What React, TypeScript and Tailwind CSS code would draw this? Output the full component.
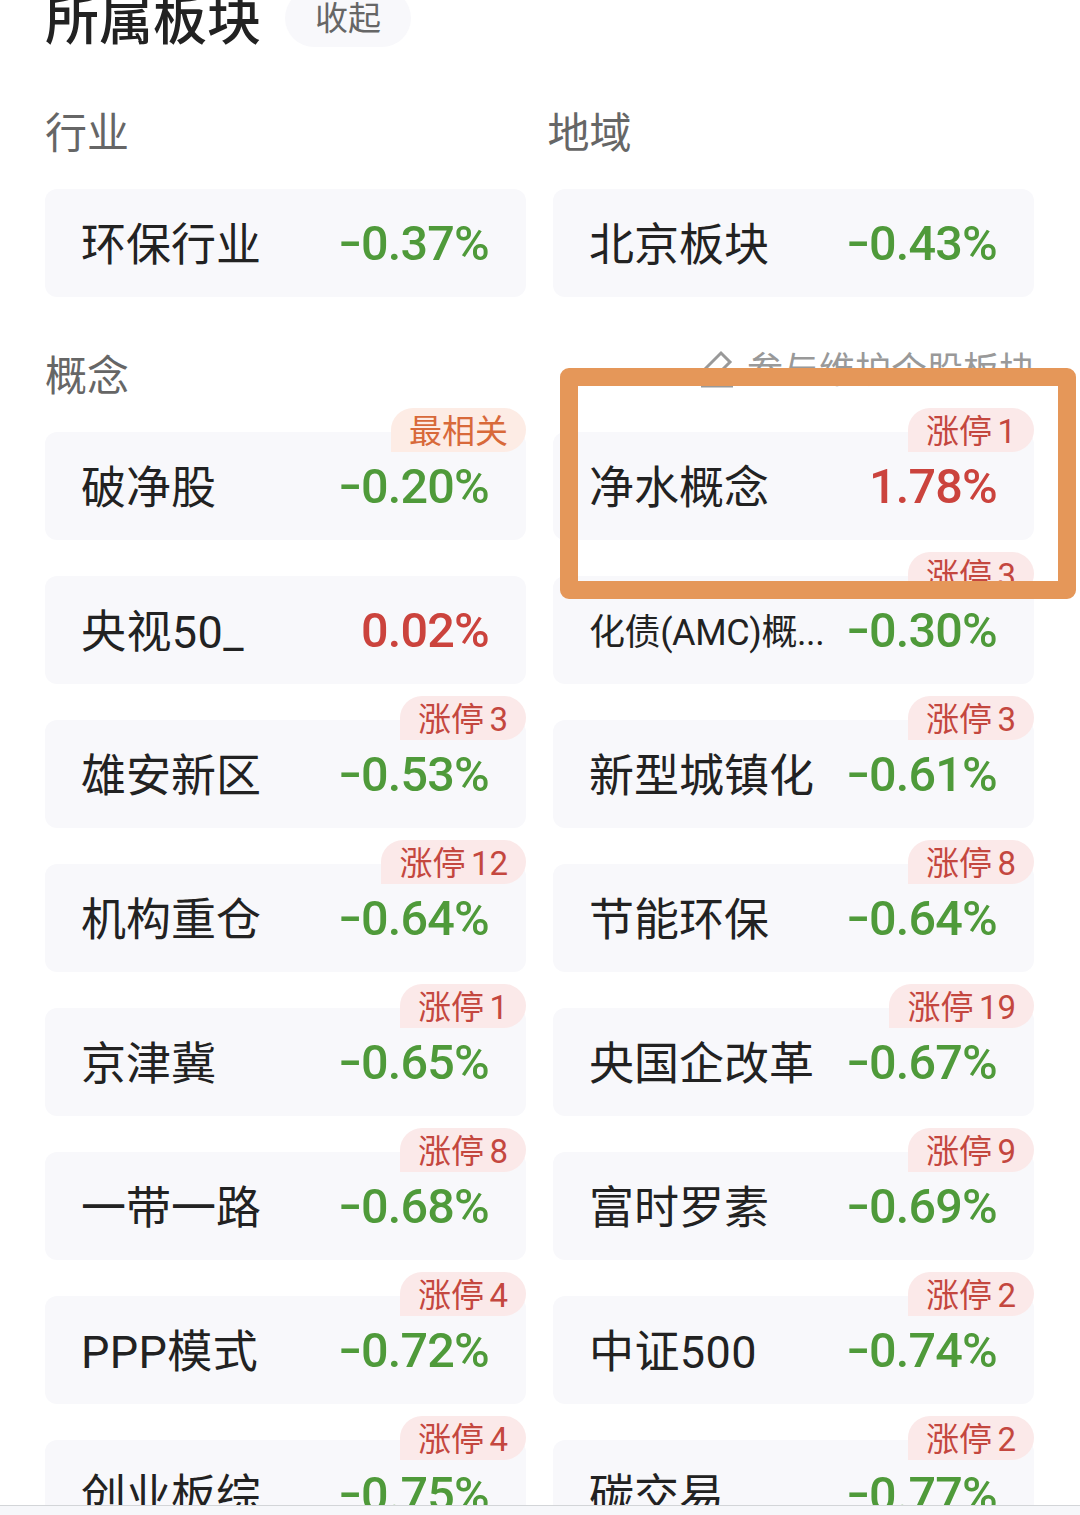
type Sector = {
  name: string;
  change: string;
  tag?: string;
  count?: number;
  small?: boolean;
};

const concepts: Sector[] = [
  { name: "破净股", change: "-0.20%", tag: "最相关" },
  { name: "净水概念", change: "1.78%", count: 1 },
  { name: "央视50_", change: "0.02%" },
  { name: "化债(AMC)概...", change: "-0.30%", count: 3, small: true },
  { name: "雄安新区", change: "-0.53%", count: 3 },
  { name: "新型城镇化", change: "-0.61%", count: 3 },
  { name: "机构重仓", change: "-0.64%", count: 12 },
  { name: "节能环保", change: "-0.64%", count: 8 },
  { name: "京津冀", change: "-0.65%", count: 1 },
  { name: "央国企改革", change: "-0.67%", count: 19 },
  { name: "一带一路", change: "-0.68%", count: 8 },
  { name: "富时罗素", change: "-0.69%", count: 9 },
  { name: "PPP模式", change: "-0.72%", count: 4 },
  { name: "中证500", change: "-0.74%", count: 2 },
  { name: "创业板综", change: "-0.75%", count: 4 },
  { name: "碳交易", change: "-0.77%", count: 2 },
];

function nameStyle(name: string, small?: boolean) {
  if (small) return "text-[36px] tracking-[-0.4px]";
  // names with latin letters or digits are set a little wider
  if (/[A-Z0-9]/.test(name)) return "text-[45px] tracking-[0.4px]";
  return "text-[45px]";
}

function Change({ value }: { value: string }) {
  const down = value.startsWith("-");

  return (
    <span className={`-mr-px flex items-center pt-[2px] pr-[2px] text-[48.5px] leading-[54px] font-medium tracking-[-0.8px] ${down ? "text-[#4f9a3a]" : "text-[#cb433d]"}`}>
      {down && <span className="inline-block origin-right scale-x-[1.4] pb-1">-</span>}
      {value.replace("-", "")}
    </span>
  );
}

function SectorCard({ name, change, tag, count, small }: Sector) {
  return (
    <li className="relative flex h-[108px] items-center justify-between rounded-xl bg-[#f8f8fb] px-9">

      <span className={`pt-[6px] whitespace-nowrap text-[#222] ${nameStyle(name, small)}`}>{name}</span>

      <Change value={change} />

      {tag && (
        <span className="absolute -top-6 right-0 flex h-11 items-center rounded-[22px] rounded-bl-none bg-[#fdece5] px-[18px] pt-[3px] text-[33px] text-[#d8693a]">
          {tag}
        </span>
      )}

      {count && (
        <span className="absolute -top-6 right-0 flex h-11 items-center gap-[5.5px] rounded-[22px] rounded-bl-none bg-[#fbe9e9] px-[18px] pt-[3px] text-[33px] text-[#c4473f]">
          <span>涨停</span>
          <span>{count}</span>
        </span>
      )}

    </li>
  );
}

export default function App() {
  return (
    <main className="relative flex h-[1515px] w-[1080px] flex-col overflow-hidden bg-white font-[Roboto,'Noto_Sans_CJK_SC',sans-serif]">

      <div className="min-h-0 flex-1 overflow-hidden pr-[46px] pl-[45px]">

        {/* 标题 */}
        <header className="-mt-[11px] flex h-[58px] items-center gap-6">
          <h1 className="mt-[7px] text-[54px] leading-[58px] font-medium text-[#222]">所属板块</h1>
          <button className="h-[58px] rounded-full bg-[#f8f8fb] px-[30px] pt-[1px] text-[33px] leading-[58px] text-[#666]">收起</button>
        </header>

        {/* 行业 / 地域 */}
        <div className="mt-[57px] grid h-[60px] grid-cols-[502.5px_1fr] text-[42px] leading-[60px] text-[#666]">
          <h2>行业</h2>
          <h2>地域</h2>
        </div>

        <ul className="mt-[25px] grid grid-cols-2 gap-x-[27px]">
          <SectorCard name="环保行业" change="-0.37%" />
          <SectorCard name="北京板块" change="-0.43%" />
        </ul>

        {/* 概念 */}
        <div className="mt-[50px] flex h-[60px] justify-between">
          <h2 className="text-[42px] leading-[60px] text-[#666]">概念</h2>
          <a className="-mr-[1px] flex h-[48px] items-center gap-3 text-[36px] text-[#999]">
            <svg className="-mt-[5px] h-[38px] w-9" viewBox="0 0 36 38" fill="none" stroke="currentColor" strokeWidth="3">
              <path d="M3 22 L22 3 L31 12 L12 31 L3 31 Z" />
              <path d="M2 36 H34" />
            </svg>
            参与维护个股板块
          </a>
        </div>

        <ul className="mt-[25px] grid grid-cols-2 gap-x-[27px] gap-y-9">
          {concepts.map((item) => (
            <SectorCard key={item.name} {...item} />
          ))}
        </ul>

      </div>

      <footer className="h-[10px] shrink-0 border-t border-[#d3d5d8] bg-[#f6f7fa]" />

      {/* marker drawn over the list */}
      <div className="pointer-events-none absolute top-[368px] left-[560px] h-[231px] w-[516px] rounded-[9px] border-[18px] border-[#e59759]" />

    </main>
  );
}
